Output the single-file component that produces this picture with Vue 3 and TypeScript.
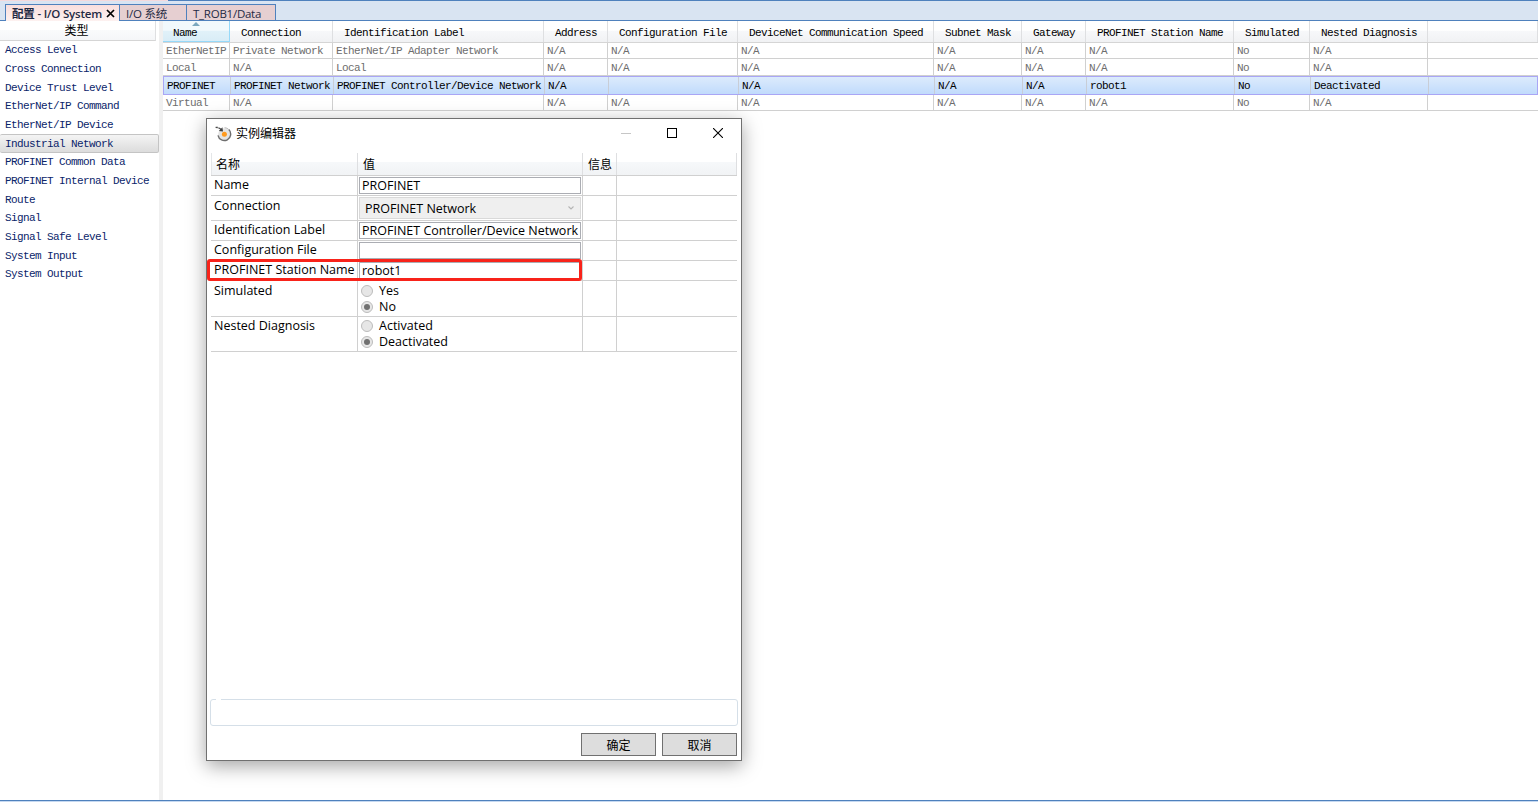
<script setup lang="ts">
interface NetworkRow {
  cells: string[]
  selected?: boolean
}

const types: string[] = [
  'Access Level', 'Cross Connection', 'Device Trust Level', 'EtherNet/IP Command',
  'EtherNet/IP Device', 'Industrial Network', 'PROFINET Common Data',
  'PROFINET Internal Device', 'Route', 'Signal', 'Signal Safe Level',
  'System Input', 'System Output',
]
const activeType = 'Industrial Network'

const columns: string[] = [
  'Name', 'Connection', 'Identification Label', 'Address', 'Configuration File',
  'DeviceNet Communication Speed', 'Subnet Mask', 'Gateway', 'PROFINET Station Name',
  'Simulated', 'Nested Diagnosis',
]

const rows: NetworkRow[] = [
  { cells: ['EtherNetIP', 'Private Network', 'EtherNet/IP Adapter Network', 'N/A', 'N/A', 'N/A', 'N/A', 'N/A', 'N/A', 'No', 'N/A'] },
  { cells: ['Local', 'N/A', 'Local', 'N/A', 'N/A', 'N/A', 'N/A', 'N/A', 'N/A', 'No', 'N/A'] },
  { cells: ['PROFINET', 'PROFINET Network', 'PROFINET Controller/Device Network', 'N/A', '', 'N/A', 'N/A', 'N/A', 'robot1', 'No', 'Deactivated'], selected: true },
  { cells: ['Virtual', 'N/A', '', 'N/A', 'N/A', 'N/A', 'N/A', 'N/A', 'N/A', 'No', 'N/A'] },
]
</script>

<template>
  <div class="app">
    <div class="progress"></div>
    <nav class="tabs">
      <div class="tab active">
        <span class="t1">配置 - I/O System</span>
        <svg width="9" height="9" viewBox="0 0 9 9"><path d="M1 1L8 8M8 1L1 8" stroke="#000" stroke-width="1.7" /></svg>
      </div>
      <div class="tab second"><span class="t2">I/O 系统</span></div>
      <div class="tab third"><span class="t3">T_ROB1/Data</span></div>
    </nav>

    <div class="body">
      <aside class="side">
        <div class="side-head"><span>类型</span></div>
        <ul>
          <li v-for="t in types" :key="t" :class="{ on: t === activeType }"><span class="mono">{{ t }}</span></li>
        </ul>
      </aside>
      <div class="splitter"></div>
      <main class="grid">
        <div class="row head">
          <div v-for="(c, i) in columns" :key="c" class="cell" :class="{ sorted: i === 0 }">
            <svg v-if="i === 0" class="arrow" width="8" height="4" viewBox="0 0 8 4"><path d="M0 4L4 0L8 4Z" fill="#7ba7bd" /></svg>
            <span class="mono">{{ c }}</span>
          </div>
          <div class="cell last"></div>
        </div>
        <div v-for="(r, i) in rows" :key="i" class="row" :class="['r' + i, { selected: r.selected }]">
          <div v-for="(c, j) in r.cells" :key="j" class="cell"><span class="mono">{{ c }}</span></div>
          <div class="cell last"></div>
        </div>
      </main>
    </div>

    <section class="dialog">
      <header class="title">
        <svg class="logo" width="17" height="16" viewBox="0 0 17 16">
          <circle cx="9.2" cy="8.2" r="6" fill="#e4e4e4" />
          <path d="M13.8 3.6A6.4 6.4 0 1 1 3 9.4" fill="none" stroke="#6e6e6e" stroke-width="1.4" />
          <path d="M9.6 1.7A6.4 6.4 0 0 1 13.8 3.6" fill="none" stroke="#b4b4b4" stroke-width="1" />
          <path d="M.6 1.3L2.8 1.5M3.4 1.8Q5 2.2 6.2 3.6" fill="none" stroke="#4a4a4a" stroke-width="1.3" />
          <path d="M7.4 1.2L8 5.6L3.8 5Z" fill="#404040" />
          <circle cx="9.4" cy="8.2" r="2.5" fill="#ff9a1e" />
        </svg>
        <span class="caption">实例编辑器</span>
        <div class="winbtns">
          <svg width="10" height="10" viewBox="0 0 10 10"><path d="M0 5.5H10" stroke="#c6c6c6" /></svg>
          <svg width="10" height="10" viewBox="0 0 10 10"><rect x=".5" y=".5" width="9" height="9" fill="none" stroke="#000" /></svg>
          <svg width="10" height="10" viewBox="0 0 10 10"><path d="M0 0L10 10M10 0L0 10" stroke="#000" stroke-width="1.1" /></svg>
        </div>
      </header>

      <div class="props">
        <div class="prow phead">
          <div>名称</div><div>值</div><div>信息</div><div></div>
        </div>
        <div class="prow h20">
          <div class="lab">Name</div>
          <div class="val"><div class="input">PROFINET</div></div><div></div><div></div>
        </div>
        <div class="prow h25">
          <div class="lab conn">Connection</div>
          <div class="val">
            <div class="combo">
              <span>PROFINET Network</span>
              <svg width="6" height="4" viewBox="0 0 6 4"><path d="M.5 .5L3 3L5.5 .5" fill="none" stroke="#b4b4b4" stroke-width="1.1" /></svg>
            </div>
          </div><div></div><div></div>
        </div>
        <div class="prow h20">
          <div class="lab">Identification Label</div>
          <div class="val"><div class="input">PROFINET Controller/Device Network</div></div><div></div><div></div>
        </div>
        <div class="prow h20">
          <div class="lab">Configuration File</div>
          <div class="val"><div class="input"></div></div><div></div><div></div>
        </div>
        <div class="prow h20">
          <div class="lab">PROFINET Station Name</div>
          <div class="val"><div class="input">robot1</div></div><div></div><div></div>
          <div class="marker"></div>
        </div>
        <div class="prow h36">
          <div class="lab conn">Simulated</div>
          <div class="radios"><label><i></i>Yes</label><label><i class="on"></i>No</label></div><div></div><div></div>
        </div>
        <div class="prow h35">
          <div class="lab">Nested Diagnosis</div>
          <div class="radios"><label><i></i>Activated</label><label><i class="on"></i>Deactivated</label></div><div></div><div></div>
        </div>
      </div>

      <div class="info"><span class="notch"></span></div>
      <footer class="buttons"><button>确定</button><button>取消</button></footer>
    </section>
  </div>
</template>

<style>
body { margin: 0; overflow: hidden; }
</style>

<style scoped>
* { box-sizing: border-box; }
.app {
  position: relative; width: 1538px; height: 802px; display: flex; flex-direction: column;
  background: #fff; color: #000; overflow: hidden; white-space: nowrap;
  font: 13px "Open Sans", "Noto Sans CJK SC", sans-serif;
}
.progress { height: 1px; background: linear-gradient(90deg, #f4d9dc 168px, #4f81bd 168px); }
.tabs { height: 20px; display: flex; padding: 3px 0 0 5px; background: #d9e4f2; border-bottom: 1px solid #4f81bd; }
.tab {
  height: 16px; background: #e6cfd1; border: 1px solid #4f81bd; border-bottom: 0; border-left: 0;
  display: flex; align-items: center; padding-left: 6px; font-size: 12px; color: #1f2a44; line-height: 16px;
}
.tab > span { position: relative; top: 1px; }
.tab.active { width: 115px; height: 17px; border-left: 1px solid #4f81bd; background: linear-gradient(#f9dedd, #fdf1f0); font-weight: 600; }
.tab.active svg { flex: none; margin-top: 1px; }
.tab.second { width: 67px; }
.tab.third { width: 89px; }
.t1 { font-size: 11.5px; width: 94px; letter-spacing: -.2px; }
.t2 { font-size: 11.5px; letter-spacing: -.2px; }
.t3 { font-size: 11.5px; letter-spacing: -.25px; }

.body { flex: 1; display: flex; min-height: 0; border-bottom: 1px solid #4f81bd; box-shadow: 0 1px #c6d9f1; margin-bottom: 1px; }
.mono { display: inline-block; font: 11px/12px "Liberation Mono", monospace; letter-spacing: -.6px; white-space: pre; }
.side { width: 159px; }
.side-head {
  width: 156px; height: 20px; text-align: center; font-size: 12px; line-height: 20px; padding-right: 2px;
  background: linear-gradient(#fff 45%, #fafbfc 46%, #f5f6f8); border-right: 1px solid #dedfe1; border-bottom: 1px solid #d5d5d5;
}
ul { list-style: none; margin: 0; padding: 0; }
li { height: 18.67px; display: flex; align-items: center; padding-left: 5px; color: #0a246a; }
li.on { border: 1px solid #c4c4c4; border-left: 0; border-radius: 2px; background: linear-gradient(#f4f4f4, #dcdcdc); }
.splitter { width: 4px; background: #f0f0f0; }
.grid { flex: 1; color: #6d6d6d; }
.row { display: grid; grid-template-columns: 67px 103px 211px 64px 130px 196px 88px 64px 148px 76px 118px 1fr; border-bottom: 1px solid #d0d0d0; }
.cell { border-right: 1px solid #d0d0d0; padding-left: 3px; display: flex; align-items: center; overflow: hidden; }
.cell.last { border-right: 0; }
.head { height: 22px; color: #000; border-bottom-color: #d5d5d5; background: linear-gradient(#fff 45%, #f7f8fa 46%, #f1f2f4); }
.head .cell { padding: 2px 0 0 11px; border-right: 1px solid #dedfe1; position: relative; }
.head .sorted { padding-left: 10px; background: linear-gradient(#f2f9fc 45%, #e1f1f9 46%, #d8ecf6); border-right-color: #96d9f9; box-shadow: inset 0 -1px #96d9f9; }
.arrow { position: absolute; left: 29px; top: 1px; }
.r0 { height: 16px; }
.r1 { height: 17px; }
.r1 .cell { padding-top: 2px; }
.r3 { height: 16px; }
.selected { height: 19px; color: #000; border: 1px solid #a9a6f5; background: linear-gradient(#dcebfc, #c1dbfc); }
.selected .cell { border-right-color: #c8cdd6; }

.dialog {
  position: absolute; left: 206px; top: 118px; width: 536px; height: 643px; display: flex; flex-direction: column;
  background: #fff; border: 1px solid #707070; box-shadow: 0 5px 18px rgba(0, 0, 0, .36); padding: 0 3px 4px 3px;
}
.title { height: 34px; display: flex; align-items: center; padding: 0 14px 6px 5px; }
.logo { margin-top: 1px; }
.caption { font-size: 12px; margin-left: 4px; line-height: 16px; padding-top: 1px; }
.winbtns { margin-left: auto; padding-right: 1px; display: flex; gap: 36px; }
.props { margin-left: 1px; width: 526px; }
.prow { display: grid; grid-template-columns: 147px 225px 34px 120px; border-bottom: 1px solid #d0d0d0; position: relative; }
.prow > div { border-right: 1px solid #d0d0d0; }
.prow > div:nth-child(4) { border-right-color: transparent; }
.phead { height: 23px; background: linear-gradient(#fff 42%, #f6f8fa 43%, #f1f3f5); font-size: 12px; line-height: 24px; }
.phead > div { padding-left: 5px; border-right-color: #dedfe1; height: 22px; }
.phead > div:first-child { border-left: 1px solid #e4e6e8; padding-left: 4px; }
.phead > div:nth-child(4) { border-right-color: #dedfe1; }
.h20 { height: 20px; }
.h25 { height: 25px; }
.h36 { height: 36px; }
.h35 { height: 35px; }
.lab { padding-left: 3px; line-height: 18px; font-size: 12.5px; }
.conn { line-height: 20px; }
.val { padding: 1px; display: flex; }
.input { flex: 1; height: 17px; border: 1px solid #abadb3; padding-left: 2px; line-height: 15px; font-size: 12.5px; background: #fff; }
.combo { flex: 1; height: 22px; border: 1px solid #d9d9d9; background: #efefef; display: flex; align-items: center; justify-content: space-between; padding: 0 6px 0 5px; font-size: 12.5px; }
.prow .marker { position: absolute; left: -4px; top: -2px; width: 375px; height: 22px; border: 3px solid #f8231a; border-radius: 3px; }
.radios { padding: 2px 0 0 3px; }
.radios label { display: flex; align-items: center; height: 16px; line-height: 14px; padding-bottom: 1px; font-size: 12.5px; }
.h35 .radios { padding-top: 1px; }
.radios i { width: 12px; height: 12px; border-radius: 50%; background: #e6e6e6; border: 1px solid #bcbcbc; margin: 1px 6px 0 0; display: flex; align-items: center; justify-content: center; }
.radios i.on::after { content: ""; width: 6px; height: 6px; border-radius: 50%; background: #707070; }
.info { margin-top: auto; height: 27px; width: 528px; border: 1px solid #d5dfe8; border-radius: 3px; position: relative; }
.notch { position: absolute; left: 5px; top: -1px; width: 5px; height: 1px; background: #fff; }
.buttons { display: flex; justify-content: flex-end; gap: 6px; padding: 7px 1px 0 0; }
button { width: 75px; height: 23px; padding: 0; border: 1px solid #707070; border-radius: 0; background: #ddd; color: #000; font: 12px/20px "Noto Sans CJK SC", sans-serif; }
</style>
